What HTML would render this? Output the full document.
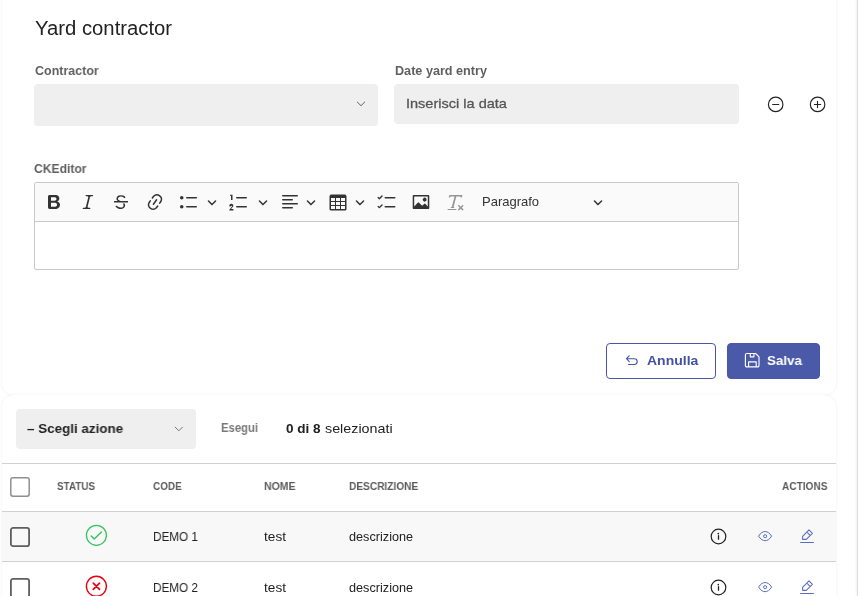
<!DOCTYPE html>
<html>
<head>
<meta charset="utf-8">
<title>Yard contractor</title>
<style>
html,body{margin:0;padding:0;overflow:hidden;}
#root{position:relative;width:867px;height:596px;overflow:hidden;background:#fff;}
body{width:867px;height:596px;overflow:hidden;background:#fff;position:relative;font-family:"Liberation Sans",sans-serif;color:#222;}
.abs{position:absolute;}
.card{position:absolute;background:#fff;box-shadow:0 0 3px rgba(0,0,0,.075);}
#card1{left:2px;top:-20px;width:834px;height:414.800px;border-radius:12px;}
#card2{left:2px;top:395px;width:834px;height:260px;border-radius:12px 12px 0 0;}
.title{left:34px;top:16px;font-size:19.5px;line-height:24px;color:#222;white-space:nowrap;}
.lbl{font-size:12.4px;font-weight:bold;color:#606060;line-height:14px;white-space:nowrap;letter-spacing:-0.1px;}
.inp{background:#efefef;border-radius:4px;}
.ph{font-size:14px;color:#555;line-height:16px;white-space:nowrap;}
.ck{left:34px;top:182px;width:703px;height:86px;border:1px solid #c9c9c9;border-radius:2px;background:#fff;}
.cktb{left:0;top:0;width:703px;height:38px;background:#fafafa;border-bottom:1px solid #c9c9c9;}
.cki{position:absolute;width:20px;height:20px;top:9px;fill:#333;}
.cka{position:absolute;width:10px;height:10px;top:14px;fill:#333;}
.btn{height:34px;border-radius:4px;border:1px solid #4858a7;font-weight:bold;font-size:14px;line-height:34px;white-space:nowrap;}
th,td{padding:0;}
.tx{will-change:transform;position:absolute;white-space:nowrap;line-height:16px;transform-origin:0 50%;}
.hd{font-size:11px;font-weight:bold;color:#555;line-height:12px;white-space:nowrap;}
.cell{font-size:13px;color:#222;line-height:14px;white-space:nowrap;}
.cb{box-sizing:border-box;width:20px;height:20px;border:1.800px solid #5e5e5e;border-radius:3px;background:transparent;left:10px;}
.hline{left:2px;width:834px;height:1px;background:#d0d0d0;}
</style>
</head>
<body>
<div id="root">
<div class="abs" style="left:857px;top:0;width:10px;height:596px;background:#fff;border-left:1px solid #dcdcdc;box-shadow:-1px 0 2px rgba(0,0,0,.05);"></div>
<div class="card" id="card1"></div>
<div class="card" id="card2"></div>


<div class="abs inp" style="left:34px;top:84px;width:344px;height:42px;"></div>
<svg class="abs" style="left:355px;top:99px;" width="12" height="10" viewBox="0 0 12 10"><path d="M2.300 3.100 L6 6.700 L9.700 3.100" fill="none" stroke="#5a5a5a" stroke-width="0.950" stroke-linecap="round" stroke-linejoin="round"/></svg>

<div class="abs inp" style="left:394px;top:84px;width:345px;height:40px;"></div>

<!-- minus / plus circle -->
<svg class="abs" style="left:767px;top:96px;" width="17" height="17" viewBox="0 0 17 17"><circle cx="8.700" cy="8.400" r="7.250" fill="none" stroke="#222" stroke-width="1.150"/><path d="M5.600 8.500h6.200" stroke="#222" stroke-width="1.100" stroke-linecap="round"/></svg>
<svg class="abs" style="left:809px;top:96px;" width="17" height="17" viewBox="0 0 17 17"><circle cx="8.600" cy="8.400" r="7.250" fill="none" stroke="#222" stroke-width="1.150"/><path d="M5.400 8.500h6.200M8.500 5.400v6.200" stroke="#222" stroke-width="1.100" stroke-linecap="round"/></svg>

<div class="abs ck">
  <div class="abs cktb">
<svg class="cki" viewBox="0 0 20 20" style="left:9.0px"><path d="M10.187 17H5.773c-.637 0-1.092-.138-1.364-.415-.273-.277-.409-.718-.409-1.323V4.738c0-.617.14-1.062.419-1.332.279-.27.73-.406 1.354-.406h4.68c.69 0 1.288.041 1.793.124.506.083.96.242 1.36.478.341.197.644.447.906.75a3.262 3.262 0 0 1 .808 2.162c0 1.401-.722 2.426-2.167 3.075C15.05 10.175 16 11.315 16 13.01a3.756 3.756 0 0 1-2.296 3.504 6.1 6.1 0 0 1-1.517.377c-.571.073-1.238.11-2 .11zm-.217-6.217H7v4.087h3.069c1.977 0 2.965-.69 2.965-2.072 0-.707-.256-1.22-.768-1.537-.512-.319-1.277-.478-2.296-.478zM7 5.13v3.619h2.606c.729 0 1.292-.067 1.69-.2a1.6 1.6 0 0 0 .91-.765c.165-.267.247-.566.247-.897 0-.707-.26-1.176-.778-1.409-.519-.232-1.31-.348-2.375-.348H7z"/></svg>
<svg class="cki" viewBox="0 0 20 20" style="left:43.0px"><path d="m9.586 14.633.021.004c-.036.335.095.655.393.962.082.083.173.15.274.201h1.474a.6.6 0 1 1 0 1.2H5.304a.6.6 0 0 1 0-1.2h1.15c.474-.07.809-.182 1.005-.334.157-.122.291-.32.404-.597l2.416-9.55a1.053 1.053 0 0 0-.281-.823 1.12 1.12 0 0 0-.442-.296H8.15a.6.6 0 0 1 0-1.2h6.443a.6.6 0 1 1 0 1.2h-1.195c-.376.056-.65.155-.823.296-.215.175-.423.439-.623.79l-2.366 9.347z"/></svg>
<svg class="cki" viewBox="0 0 20 20" style="left:75.6px"><path d="M7 16.4c-.8-.4-1.500-.9-2.200-1.500a.6.6 0 0 1-.2-.5l.3-.6h1c1 1.200 2.100 1.700 3.700 1.700 1 0 1.800-.3 2.300-.6.600-.4.600-1.200.600-1.300.2-1.200-.9-2.100-.9-2.100h2.100c.3.700.400 1.200.400 1.700v.800l-.6 1.200c-.6.800-1.100 1-1.600 1.200a6 6 0 0 1-2.400.6c-1 0-1.800-.3-2.500-.6zM6.800 9 6 8.300c-.4-.5-.5-.8-.5-1.600 0-.7.100-1.300.5-1.800.4-.6 1-1 1.600-1.300a6.300 6.300 0 0 1 4.700 0 4 4 0 0 1 1.700 1l.3.700c0 .1.200.400-.2.700-.4.200-.9.100-1 0a3 3 0 0 0-1.200-1c-.4-.2-1-.3-2-.4-.7 0-1.400.2-2 .6-.8.600-1 .8-1 1.500 0 .8.500 1 1.200 1.500.6.400 1.100.7 1.900 1H6.800z"/><path d="M3 10.500V9h14v1.500z"/></svg>
<svg class="cki" viewBox="0 0 20 20" style="left:110.0px"><path d="m11.077 15 .991-1.416a.75.75 0 1 1 1.229.86l-1.148 1.640a.748.748 0 0 1-.217.206 5.251 5.251 0 0 1-8.503-5.955.741.741 0 0 1 .12-.274l1.147-1.639a.75.75 0 1 1 1.228.86L4.933 10.700l.006.003a3.750 3.750 0 0 0 6.132 4.294l.006.004zm5.494-5.335a.748.748 0 0 1-.12.274l-1.147 1.639a.75.75 0 1 1-1.228-.86l.86-1.230a3.750 3.750 0 0 0-6.144-4.301l-.86 1.229a.75.75 0 0 1-1.229-.86l1.148-1.640a.748.748 0 0 1 .217-.206 5.251 5.251 0 0 1 8.503 5.955zm-4.563-2.532a.75.75 0 0 1 .184 1.045l-3.155 4.505a.75.75 0 1 1-1.229-.86l3.155-4.506a.75.75 0 0 1 1.045-.184z"/></svg>
<svg class="cki" viewBox="0 0 20 20" style="left:144.3px"><path d="M7 5.750c0 .414.336.750.750.750h9.500a.750.750 0 1 0 0-1.500h-9.500a.750.750 0 0 0-.750.750zm-6 0C1 4.784 1.777 4 2.750 4c.966 0 1.750.777 1.750 1.750 0 .966-.777 1.750-1.750 1.750C1.784 7.500 1 6.723 1 5.750zm6 9c0 .414.336.750.750.750h9.500a.750.750 0 1 0 0-1.500h-9.500a.750.750 0 0 0-.750.750zm-6 0c0-.966.777-1.750 1.750-1.750.966 0 1.750.777 1.750 1.750 0 .966-.777 1.750-1.750 1.750-.966 0-1.750-.777-1.750-1.750z"/></svg>
<svg class="cki" viewBox="0 0 20 20" style="left:193.5px"><path d="M7 5.750c0 .414.336.750.750.750h9.500a.750.750 0 1 0 0-1.500h-9.500a.750.750 0 0 0-.750.750zM3.500 3v5H2V3.700H1v-1h2.500V3zM.343 17.857l2.590-3.257H2.920a.6.600 0 1 0-1.040 0H.556a2 2 0 1 1 3.526 0l-2 2.500h2.340V18.500H.343v-.643zM7 14.750c0 .414.336.750.750.750h9.500a.750.750 0 1 0 0-1.500h-9.500a.750.750 0 0 0-.750.750z"/></svg>
<svg class="cki" viewBox="0 0 20 20" style="left:245.3px"><path d="M2 3.750c0 .414.336.750.750.750h14.500a.750.750 0 1 0 0-1.500H2.750a.750.750 0 0 0-.750.750zm0 8c0 .414.336.750.750.750h14.500a.750.750 0 1 0 0-1.500H2.750a.750.750 0 0 0-.750.750zm0 4c0 .414.336.750.750.750h9.500a.750.750 0 1 0 0-1.500h-9.500a.750.750 0 0 0-.750.750zm0-8c0 .414.336.750.750.750h9.500a.750.750 0 1 0 0-1.500h-9.500a.750.750 0 0 0-.750.750z"/></svg>
<svg class="cki" viewBox="0 0 20 20" style="left:293.1px"><path d="M3 6v3h4V6H3zm0 4v3h4v-3H3zm0 4v3h4v-3H3zm5 3h4v-3H8v3zm5 0h4v-3h-4v3zm4-4v-3h-4v3h4zm0-4V6h-4v3h4zm1.500 8a1.500 1.500 0 0 1-1.500 1.500H3A1.500 1.500 0 0 1 1.500 17V4c.222-.863 1.068-1.500 2-1.500h13c.932 0 1.778.637 2 1.500v13zM12 13v-3H8v3h4zm0-4V6H8v3h4z"/></svg>
<svg class="cki" viewBox="0 0 20 20" style="left:342.1px"><path d="m2.315 14.705 2.224-2.240a.689.689 0 0 1 .963 0 .664.664 0 0 1 0 .949L2.865 16.070a.682.682 0 0 1-.112.089.647.647 0 0 1-.852-.051L.688 14.886a.635.635 0 0 1 0-.903.647.647 0 0 1 .910 0l.717.722zm5.185.045a.750.750 0 0 1 .750-.750h9.500a.750.750 0 1 1 0 1.500h-9.500a.750.750 0 0 1-.750-.750zM2.329 5.745l2.210-2.226a.689.689 0 0 1 .963 0 .664.664 0 0 1 0 .949L2.865 7.125a.685.685 0 0 1-.112.089.647.647 0 0 1-.852-.051L.688 5.940a.635.635 0 0 1 0-.903.647.647 0 0 1 .910 0l.731.708zM7.500 5.750A.750.750 0 0 1 8.250 5h9.500a.750.750 0 1 1 0 1.500h-9.500a.750.750 0 0 1-.750-.750z"/></svg>
<svg class="cki" viewBox="0 0 20 20" style="left:376.1px"><path d="M6.910 10.540c.260-.230.640-.210.880.030l3.360 3.140 2.230-2.060a.640.640 0 0 1 .870 0l2.520 2.970V4.500H3.200v10.120l3.710-4.080zm10.270-7.510c.600 0 1.090.470 1.090 1.050v11.840c0 .590-.490 1.060-1.090 1.060H2.790c-.600 0-1.090-.470-1.090-1.060V4.080c0-.580.490-1.050 1.100-1.050h14.380zm-5.220 5.560a1.960 1.960 0 1 1 3.400-1.960 1.960 1.960 0 0 1-3.400 1.960z"/></svg>
<svg class="cki" viewBox="0 0 20 20" style="left:410.0px;opacity:.5"><path d="M8.690 14.915c.053.052.173.083.36.093a.366.366 0 0 1 .345.485l-.003.010a.738.738 0 0 1-.697.497h-2.670a.374.374 0 0 1-.353-.496l.013-.038a.681.681 0 0 1 .644-.458c.197-.012.325-.043.386-.093a.280.280 0 0 0 .072-.110L9.592 4.500H6.269c-.359-.017-.609.013-.750.090-.142.078-.289.265-.442.563-.192.290-.516.464-.864.464H4.170a.430.430 0 0 1-.407-.569L4.460 3h13.080l-.620 2.043a.810.810 0 0 1-.775.574h-.114a.486.486 0 0 1-.486-.486c.001-.284-.054-.464-.167-.540-.112-.076-.367-.106-.766-.091h-3.280l-2.680 10.257c-.006.074.007.127.038.158zM3 17h8a.500.500 0 1 1 0 1H3a.500.500 0 1 1 0-1zm11.299 1.170a.750.750 0 1 1-1.060-1.060l1.414-1.415-1.415-1.414a.750.750 0 0 1 1.060-1.060l1.415 1.414 1.414-1.415a.750.750 0 1 1 1.060 1.060l-1.413 1.415 1.414 1.415a.750.750 0 0 1-1.060 1.060l-1.415-1.414-1.414 1.414z"/></svg>
<svg class="cka" viewBox="0 0 10 10" style="left:171.7px"><path d="M.941 4.523a.750.750 0 1 1 1.060-1.060l3.006 3.005 3.005-3.005a.750.750 0 1 1 1.060 1.060l-3.549 3.550a.750.750 0 0 1-1.168-.136L.941 4.523z"/></svg>
<svg class="cka" viewBox="0 0 10 10" style="left:222.9px"><path d="M.941 4.523a.750.750 0 1 1 1.060-1.060l3.006 3.005 3.005-3.005a.750.750 0 1 1 1.060 1.060l-3.549 3.550a.750.750 0 0 1-1.168-.136L.941 4.523z"/></svg>
<svg class="cka" viewBox="0 0 10 10" style="left:270.7px"><path d="M.941 4.523a.750.750 0 1 1 1.060-1.060l3.006 3.005 3.005-3.005a.750.750 0 1 1 1.060 1.060l-3.549 3.550a.750.750 0 0 1-1.168-.136L.941 4.523z"/></svg>
<svg class="cka" viewBox="0 0 10 10" style="left:319.8px"><path d="M.941 4.523a.750.750 0 1 1 1.060-1.060l3.006 3.005 3.005-3.005a.750.750 0 1 1 1.060 1.060l-3.549 3.550a.750.750 0 0 1-1.168-.136L.941 4.523z"/></svg>
<svg class="cka" viewBox="0 0 10 10" style="left:558.3px"><path d="M.941 4.523a.750.750 0 1 1 1.060-1.060l3.006 3.005 3.005-3.005a.750.750 0 1 1 1.060 1.060l-3.549 3.550a.750.750 0 0 1-1.168-.136L.941 4.523z"/></svg>
<div class="abs" id="t_para" style="will-change:transform;left:447.4px;top:11px;font-size:13px;line-height:16px;color:#333;white-space:nowrap;">Paragrafo</div>
</div>
</div>

<!-- buttons -->
<div class="abs btn" style="left:606px;top:343px;width:108px;color:#4252a3;background:#fff;"></div>
<svg class="abs" style="left:625px;top:354px;" width="14" height="12" viewBox="0 0 14 12"><path d="M4.200 1.800 L1.500 4.700 L4.200 7.600 M1.700 4.700 H9.300 A2.900 2.900 0 0 1 9.300 10.500 H3.400" fill="none" stroke="#4656a6" stroke-width="1.150" stroke-linecap="round" stroke-linejoin="round"/></svg>

<div class="abs btn" style="left:727px;top:343px;width:91px;color:#fff;background:#4a5aa8;"></div>
<svg class="abs" style="left:744px;top:352px;" width="17" height="17" viewBox="0 0 17 17"><path d="M1.400 2.900 a1.400 1.400 0 0 1 1.400-1.400 H11.600 L15 4.900 V13.500 a1.400 1.400 0 0 1 -1.400 1.400 H2.800 a1.400 1.400 0 0 1 -1.400 -1.400 Z M4.600 14.700 V9.800 H12.200 V14.700 M6.300 1.700 V4.800 H9.900 V1.700" fill="none" stroke="#fff" stroke-width="1.150" stroke-linejoin="round"/></svg>

<!-- action bar -->
<div class="abs inp" style="left:16px;top:409px;width:180px;height:40px;"></div>
<svg class="abs" style="left:174px;top:425px;" width="10" height="8" viewBox="0 0 10 8"><path d="M1.200 2.200 L4.800 5.800 L8.400 2.200" fill="none" stroke="#777" stroke-width="1" stroke-linecap="round" stroke-linejoin="round"/></svg>

<!-- table -->
<div class="abs hline" style="top:463px;"></div>
<div class="abs hline" style="top:511px;"></div>
<div class="abs" style="left:2px;top:512px;width:834px;height:49px;background:#f8f8f8;"></div>
<div class="abs hline" style="top:561px;"></div>

<svg class="abs" style="left:10px;top:477px;" width="20" height="20"><rect x="0.800" y="0.800" width="18.400" height="18.400" rx="2.200" fill="#fff" stroke="#909090" stroke-width="1.500"/></svg>
<svg class="abs" style="left:10px;top:527px;" width="20" height="20"><rect x="0.900" y="0.900" width="18.200" height="18.200" rx="2.200" fill="none" stroke="#5e5e5e" stroke-width="1.800"/></svg>
<svg class="abs" style="left:10px;top:578px;" width="20" height="20"><rect x="0.900" y="0.900" width="18.200" height="18.200" rx="2.200" fill="none" stroke="#5e5e5e" stroke-width="1.800"/></svg>



<!-- status icons -->
<svg class="abs" style="left:84px;top:523px;" width="24" height="24" viewBox="0 0 24 24"><circle cx="12.400" cy="12.300" r="10" fill="none" stroke="#35c45e" stroke-width="1.300"/><path d="M7.200 13 L10.200 16 L17.400 8.900" fill="none" stroke="#35c45e" stroke-width="1.400" stroke-linecap="round" stroke-linejoin="round"/></svg>
<svg class="abs" style="left:84px;top:574px;" width="24" height="24" viewBox="0 0 24 24"><circle cx="12.400" cy="12.300" r="10" fill="none" stroke="#e9000f" stroke-width="1.400"/><path d="M9.300 9.200 L15.500 15.400 M15.500 9.200 L9.300 15.400" fill="none" stroke="#e9000f" stroke-width="1.700" stroke-linecap="round"/></svg>

<!-- action icons -->
<svg class="abs" style="left:710px;top:528px;" width="17" height="17" viewBox="0 0 17 17"><circle cx="8.500" cy="8.500" r="7.300" fill="none" stroke="#222" stroke-width="1.200"/><path d="M8.500 7.700 V11.200" stroke="#222" stroke-width="1.300" stroke-linecap="round"/><circle cx="8.300" cy="5.600" r="0.850" fill="#222"/></svg>
<svg class="abs" style="left:757px;top:528px;" width="17" height="17" viewBox="0 0 17 17"><path d="M1.600 8.100 C3.600 4.850 5.900 3.550 8.100 3.550 S12.600 4.850 14.600 8.100 C12.600 11.350 10.300 12.650 8.100 12.650 S3.600 11.350 1.600 8.100 Z" fill="none" stroke="#5a6bc0" stroke-width="1" stroke-linejoin="round"/><circle cx="8.150" cy="8.200" r="1.550" fill="none" stroke="#5a6bc0" stroke-width="1"/></svg>
<svg class="abs" style="left:799px;top:528px;" width="17" height="17" viewBox="0 0 17 17"><path d="M3.600 11.350 V8.300 L10 1.900 L13.400 5.300 L7.300 11.350 Z M7.900 4.100 L11.100 7.300" fill="none" stroke="#5a6bc0" stroke-width="1.050" stroke-linejoin="round" stroke-linecap="round"/><path d="M1.600 14.500 H14.400" stroke="#5a6bc0" stroke-width="1.100" stroke-linecap="round"/></svg>
<svg class="abs" style="left:710px;top:579px;" width="17" height="17" viewBox="0 0 17 17"><circle cx="8.500" cy="8.500" r="7.300" fill="none" stroke="#222" stroke-width="1.200"/><path d="M8.500 7.700 V11.200" stroke="#222" stroke-width="1.300" stroke-linecap="round"/><circle cx="8.300" cy="5.600" r="0.850" fill="#222"/></svg>
<svg class="abs" style="left:757px;top:579px;" width="17" height="17" viewBox="0 0 17 17"><path d="M1.600 8.100 C3.600 4.850 5.900 3.550 8.100 3.550 S12.600 4.850 14.600 8.100 C12.600 11.350 10.300 12.650 8.100 12.650 S3.600 11.350 1.600 8.100 Z" fill="none" stroke="#5a6bc0" stroke-width="1" stroke-linejoin="round"/><circle cx="8.150" cy="8.200" r="1.550" fill="none" stroke="#5a6bc0" stroke-width="1"/></svg>
<svg class="abs" style="left:799px;top:579px;" width="17" height="17" viewBox="0 0 17 17"><path d="M3.600 11.350 V8.300 L10 1.900 L13.400 5.300 L7.300 11.350 Z M7.900 4.100 L11.100 7.300" fill="none" stroke="#5a6bc0" stroke-width="1.050" stroke-linejoin="round" stroke-linecap="round"/><path d="M1.600 14.500 H14.400" stroke="#5a6bc0" stroke-width="1.100" stroke-linecap="round"/></svg>

<!-- text -->
<div class="tx" id="t_title" style="left:34.7px;top:20.27px;font-size:20px;color:#222;transform:scaleX(1.0137);">Yard contractor</div>
<div class="tx" id="l_contr" style="left:34.7px;top:62.77px;font-size:12.5px;font-weight:bold;color:#606060;transform:scaleX(0.9968);">Contractor</div>
<div class="tx" id="l_date" style="left:394.9px;top:62.67px;font-size:12.5px;font-weight:bold;color:#606060;transform:scaleX(1.0108);">Date yard entry</div>
<div class="tx" id="p_date" style="left:406.4px;top:95.92px;font-size:13.5px;color:#555;-webkit-text-stroke:0.300px #555;transform:scaleX(1.0757);">Inserisci la data</div>
<div class="tx" id="l_ck" style="left:34.4px;top:160.77px;font-size:12.5px;font-weight:bold;color:#606060;transform:scaleX(0.9691);">CKEditor</div>
<div class="tx" id="t_annulla" style="left:646.7px;top:353.12px;font-size:13.5px;font-weight:bold;color:#4252a3;transform:scaleX(1.0364);">Annulla</div>
<div class="tx" id="t_salva" style="left:766.8px;top:352.82px;font-size:13.5px;font-weight:bold;color:#fff;transform:scaleX(0.9892);">Salva</div>
<div class="tx" id="t_scegli" style="left:27.3px;top:421.42px;font-size:13.5px;font-weight:bold;color:#222;transform:scaleX(0.9938);">&ndash; Scegli azione</div>
<div class="tx" id="t_esegui" style="left:220.8px;top:420.04px;font-size:12px;font-weight:bold;color:#787878;transform:scaleX(0.9401);">Esegui</div>
<div class="tx" id="t_sel_b" style="left:286.1px;top:421.12px;font-size:13.5px;font-weight:bold;color:#222;transform:scaleX(1.0024);">0 di 8</div>
<div class="tx" id="t_sel_s" style="left:324.6px;top:421.12px;font-size:13.5px;color:#222;transform:scaleX(1.0596);">selezionati</div>
<div class="tx" id="h_status" style="left:56.6px;top:478.35px;font-size:11.4px;font-weight:bold;color:#5c5c5c;transform:scaleX(0.8684);">STATUS</div>
<div class="tx" id="h_code" style="left:152.6px;top:478.35px;font-size:11.4px;font-weight:bold;color:#5c5c5c;transform:scaleX(0.8748);">CODE</div>
<div class="tx" id="h_nome" style="left:263.8px;top:478.35px;font-size:11.4px;font-weight:bold;color:#5c5c5c;transform:scaleX(0.9243);">NOME</div>
<div class="tx" id="h_desc" style="left:349.2px;top:478.35px;font-size:11.4px;font-weight:bold;color:#5c5c5c;transform:scaleX(0.8890);">DESCRIZIONE</div>
<div class="tx" id="h_act" style="left:781.9px;top:478.35px;font-size:11.4px;font-weight:bold;color:#5c5c5c;transform:scaleX(0.8875);">ACTIONS</div>
<div class="tx" id="c_demo1" style="left:153.0px;top:528.74px;font-size:12.3px;color:#222;transform:scaleX(0.9543);">DEMO 1</div>
<div class="tx" id="c_test1" style="left:263.8px;top:528.63px;font-size:12.6px;color:#222;transform:scaleX(1.0831);">test</div>
<div class="tx" id="c_desc1" style="left:349.2px;top:528.63px;font-size:12.6px;color:#222;transform:scaleX(1.0062);">descrizione</div>
<div class="tx" id="c_demo2" style="left:153.0px;top:579.74px;font-size:12.3px;color:#222;transform:scaleX(0.9543);">DEMO 2</div>
<div class="tx" id="c_test2" style="left:263.8px;top:579.63px;font-size:12.6px;color:#222;transform:scaleX(1.0831);">test</div>
<div class="tx" id="c_desc2" style="left:349.2px;top:579.63px;font-size:12.6px;color:#222;transform:scaleX(1.0062);">descrizione</div>
</div>
</body>
</html>
